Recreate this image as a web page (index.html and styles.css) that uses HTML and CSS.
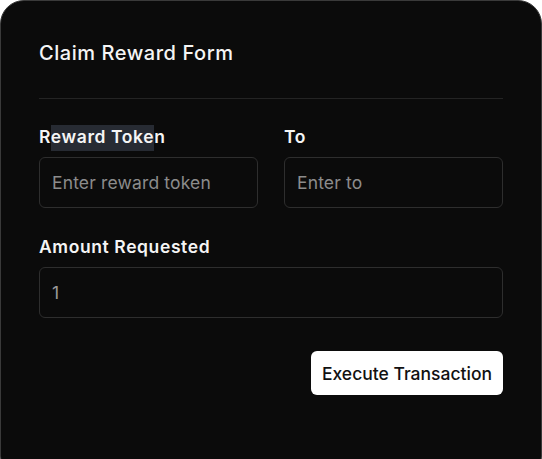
FILE: index.html
```html
<!DOCTYPE html>
<html>
<head>
<meta charset="utf-8">
<link rel="stylesheet" href="styles.css">
</head>
<body>
<div class="card">
  <div class="header">
    <h1 class="title">Claim Reward Form</h1>
  </div>
  <div class="form">
    <div class="row">
      <div class="field">
        <label class="label">R<span class="sel">eward Toke</span>n</label>
        <input class="input" type="text" placeholder="Enter reward token">
      </div>
      <div class="field">
        <label class="label">To</label>
        <input class="input" type="text" placeholder="Enter to">
      </div>
    </div>
    <div class="field">
      <label class="label">Amount Requested</label>
      <input class="input" type="text" value="1">
    </div>
    <div class="actions">
      <button class="btn">Execute Transaction</button>
    </div>
  </div>
</div>
</body>
</html>
```

FILE: styles.css
```css
html, body {
  margin: 0;
  padding: 0;
  background: #ffffff;
}
body {
  font-family: Inter, "Noto Sans", sans-serif;
  -webkit-font-smoothing: antialiased;
}
.card {
  box-sizing: border-box;
  width: 542px;
  min-height: 480px;
  background: #0b0b0b;
  border: 1px solid #3a3a3a;
  border-radius: 24px;
  padding: 0 38px;
}
.header {
  padding-top: 38px;
  padding-bottom: 31px;
  border-bottom: 1px solid #242424;
}
.title {
  margin: 0;
  font-size: 20px;
  line-height: 28px;
  font-weight: 500;
  letter-spacing: 0.55px;
  color: #f5f5f5;
}
.form {
  display: flex;
  flex-direction: column;
  padding-top: 26px;
}
.row {
  display: grid;
  grid-template-columns: 1fr 1fr;
  column-gap: 26px;
  margin-bottom: 27px;
}
.field {
  display: flex;
  flex-direction: column;
  gap: 8px;
}
.label {
  font-size: 17.5px;
  line-height: 24px;
  font-weight: 600;
  letter-spacing: 0.6px;
  color: #f5f5f5;
}
.sel {
  background: #272b33;
  padding: 1px 0 4px;
}
.input {
  box-sizing: border-box;
  height: 51px;
  width: 100%;
  background: #0b0b0b;
  border: 1px solid #2e2e2e;
  border-radius: 6px;
  padding: 0 12px;
  font-family: Inter, "Noto Sans", sans-serif;
  font-size: 17.5px;
  letter-spacing: 0.15px;
  color: #9a9a9a;
  outline: none;
}
.input::placeholder {
  color: #8c8c8c;
}
.actions {
  display: flex;
  justify-content: flex-end;
  margin-top: 33px;
}
.btn {
  height: 44px;
  padding: 0 11px;
  background: #ffffff;
  color: #111111;
  border: none;
  border-radius: 6px;
  font-family: Inter, "Noto Sans", sans-serif;
  font-size: 17.5px;
  font-weight: 500;
}
```
